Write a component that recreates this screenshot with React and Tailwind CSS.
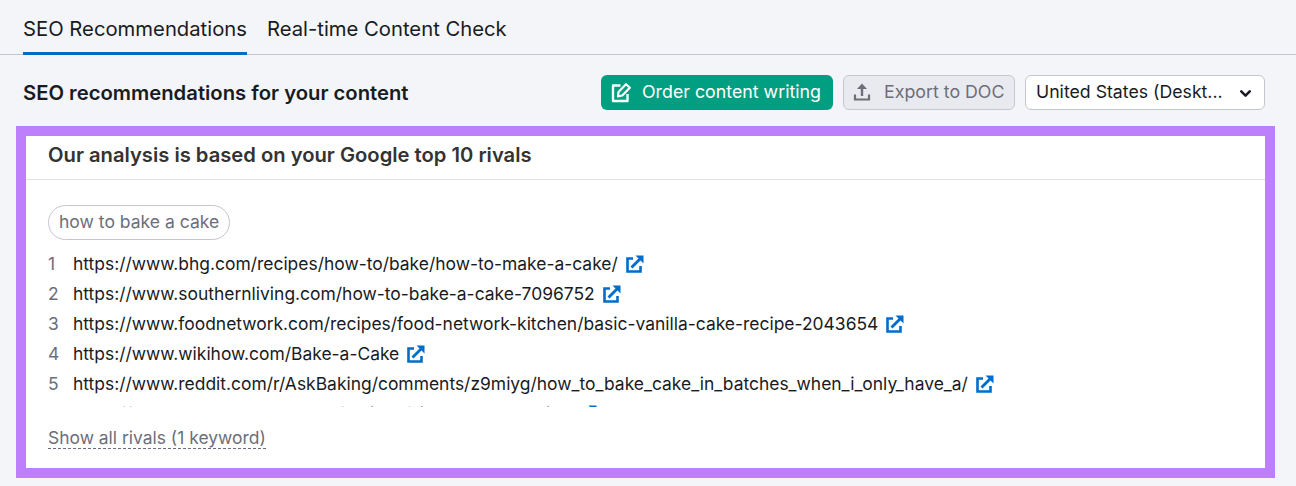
import React from 'react';
import { ChevronDown } from 'lucide-react';

const rivals = [
  'https://www.bhg.com/recipes/how-to/bake/how-to-make-a-cake/',
  'https://www.southernliving.com/how-to-bake-a-cake-7096752',
  'https://www.foodnetwork.com/recipes/food-network-kitchen/basic-vanilla-cake-recipe-2043654',
  'https://www.wikihow.com/Bake-a-Cake',
  'https://www.reddit.com/r/AskBaking/comments/z9miyg/how_to_bake_cake_in_batches_when_i_only_have_a/',
  'https://www.mycakeschool.com/recipes/simple-cake-recipe',
];

const ExternalIcon = () => (
  <svg width="18" height="18" viewBox="0 0 18 18" fill="none" className="shrink-0 text-[#006dca]">
    <path d="M7 3.5H1.5v13h13V11" stroke="currentColor" strokeWidth="2.6" />
    <path d="M5.5 12.5 15 3" stroke="currentColor" strokeWidth="2.8" />
    <path d="M9.5 0.5h8v8z" fill="currentColor" />
  </svg>
);

const EditIcon = () => (
  <svg width="21" height="21" viewBox="0 0 21 21" fill="none" className="shrink-0">
    <path d="M9.5 3.5H2v15.5h14.5v-7" stroke="currentColor" strokeWidth="2.4" strokeLinejoin="round" />
    <path d="M7.5 10 15 2.2 18.8 5.8l-7.5 7.7-4.3.9z" stroke="currentColor" strokeWidth="2.2" strokeLinejoin="round" />
  </svg>
);

const UploadIcon = () => (
  <svg width="18" height="18" viewBox="0 0 18 18" fill="none" className="shrink-0">
    <path d="M9 13V3" stroke="currentColor" strokeWidth="2.4" />
    <path d="M9 0.5 14 6H4z" fill="currentColor" />
    <path d="M2 11.5v5h14v-5" stroke="currentColor" strokeWidth="2.2" />
  </svg>
);

const App = () => {
  return (
    <div className="h-[486px] w-[1296px] overflow-hidden bg-[#f4f5f9] font-['Inter',sans-serif] text-[#191b23]">
      <div className="flex h-[55px] gap-[20px] border-b border-[#c4c7cf] pl-[23px]">
        <div className="h-[55px] border-b-[3px] border-[#006dca] pt-[16px] text-[20.25px] leading-[26px]">SEO Recommendations</div>
        <div className="pt-[16px] text-[20.25px] leading-[26px]">Real-time Content Check</div>
      </div>

      <div className="flex h-[71px] items-center justify-between pl-[23px] pr-[31px]">
        <h2 className="mt-[5px] text-[20.25px] font-semibold leading-[26px]">SEO recommendations for your content</h2>
        <div className="mt-[3px] flex items-center gap-[10px]">
          <button className="flex h-[35px] w-[232px] items-center gap-[10px] rounded-md bg-[#009f81] pl-[10px] text-[17.8px] text-white">
            <EditIcon />
            Order content writing
          </button>
          <button className="flex h-[35px] w-[172px] items-center gap-[13px] rounded-md border border-[#c4c7cf] bg-[#e9eaf0] pl-[9px] text-[17.8px] text-[#6c6e79]">
            <UploadIcon />
            Export to DOC
          </button>
          <div className="flex h-[35px] w-[240px] items-center justify-between rounded-md border border-[#c4c7cf] bg-white pl-[10px] pr-[10px] text-[17.7px]">
            <span>United States (Deskt...</span>
            <ChevronDown size={17} strokeWidth={3.6} className="mt-[2px]" />
          </div>
        </div>
      </div>

      <div className="ml-[16px] h-[352px] w-[1259px] border-[10px] border-[#bd7ffc] bg-white">
        <div className="flex h-[44px] items-center border-b border-[#e0e1e9] pb-[4px] pl-[22px] text-[20.2px] font-semibold text-[#333333]">
          Our analysis is based on your Google top 10 rivals
        </div>
        <div className="pl-[22px] pt-[25px]">
          <span className="inline-block h-[35px] rounded-full border border-[#c4c7cf] px-[10px] text-[17.55px] leading-[32px] text-[#6c6e79]">how to bake a cake</span>
          <div className="mt-[9px] h-[158px] overflow-hidden">
            {rivals.map((url, i) => (
              <div key={url} className="flex h-[30px] items-center text-[17.45px]">
                <span className="w-[25px] text-[#6c6e79]">{i + 1}</span>
                <span>{url}</span>
                <span className="ml-[8px]"><ExternalIcon /></span>
              </div>
            ))}
          </div>
          <div className="mt-[19px]">
            <span className="inline-block border-b border-dashed border-[#6c6e79] text-[17.45px] leading-[20px] text-[#6c6e79]">Show all rivals (1 keyword)</span>
          </div>
        </div>
      </div>
    </div>
  );
};

export default App;
